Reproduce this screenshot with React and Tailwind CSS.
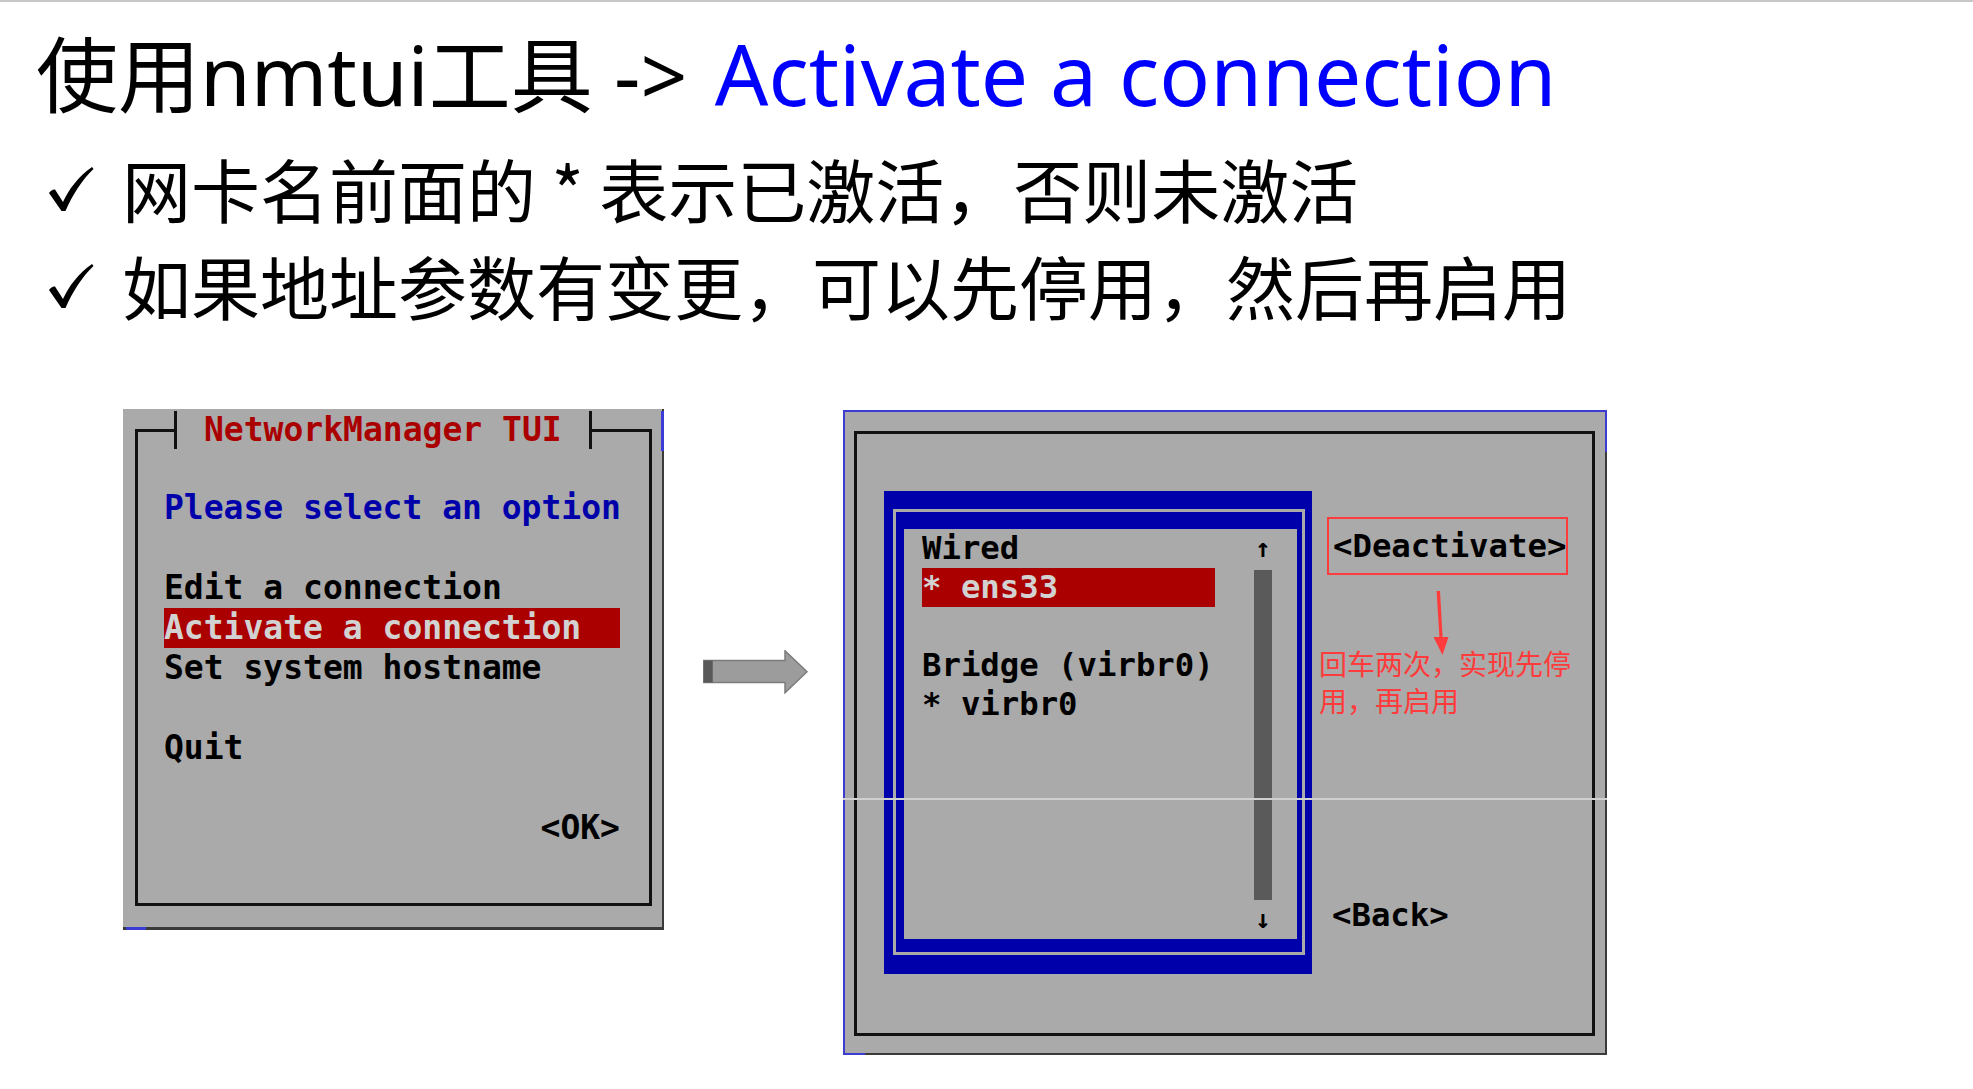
const tui = "font-['DejaVu_Sans_Mono','Liberation_Mono',monospace] font-bold"

function Check() {
  return (
    <svg width="74" height="46" viewBox="0 0 74 46" className="shrink-0">
      <path
        d="M1 27 C3 24.5 5 23 7 23.5 L15 36 C21 23 30 11 44 1 L45.5 3 C34 14 25 28 17.5 45 L13.5 45 Z"
        fill="#000"
      />
    </svg>
  )
}

function LeftPanel() {
  return (
    <div className="relative flex h-[521px] w-[541px] shrink-0 flex-col border-r-2 border-b-[3px] border-[#3a3a3a] bg-[#aaaaaa] pl-[12px] pr-[10px] pt-[20px] pb-[21px]">
      {/* screen-edge artifacts */}
      <span className="absolute right-[-2px] top-[2px] h-[40px] w-[3px] bg-[#3b3bd6]" />
      <span className="absolute bottom-[-3px] left-[3px] h-[3px] w-[20px] bg-[#3b3bd6]" />

      <div className={`relative flex-1 border-[3px] border-[#111] pl-[26px] pt-[56px] text-[33px] leading-[40px] text-black ${tui}`}>
        <div className="absolute left-[36px] top-[-21px] flex h-[38px] items-center whitespace-pre border-x-[3px] border-[#111] bg-[#aaaaaa] px-[27px] leading-[38px] text-[#aa0000]">
          NetworkManager TUI
        </div>
        <div className="w-[456px] whitespace-pre">
          <div className="text-[#0000aa]">Please select an option</div>
          <div className="h-[40px]" />
          <div>Edit a connection</div>
          <div className="bg-[#aa0000] text-[#d2d2d2]">Activate a connection</div>
          <div>Set system hostname</div>
          <div className="h-[40px]" />
          <div>Quit</div>
          <div className="h-[40px]" />
          <div className="text-right">&lt;OK&gt;</div>
        </div>
      </div>
    </div>
  )
}

function GrayArrow() {
  return (
    <svg width="106" height="44" viewBox="0 0 106 44" className="ml-[39px] mt-[241px] shrink-0">
      <path d="M0.75 10.5 H82 V0.75 L104 21.75 L82 42.75 V32.5 H0.75 Z" fill="#9c9c9c" stroke="#7c7c7c" strokeWidth="1.5" />
      <rect x="0.75" y="10.5" width="9" height="22" fill="#595959" />
    </svg>
  )
}

function RightPanel() {
  return (
    <div className="relative ml-[34px] mt-[1px] flex h-[645px] w-[764px] shrink-0 border-2 border-t-[#3c3cd2] border-l-[#3c3cd2] border-r-[#3a3a3a] border-b-[#3a3a3a] bg-[#aaaaaa] pl-[9px] pr-[10px] pt-[19px] pb-[17px]">
      <span className="absolute right-[-2px] top-[-2px] h-[42px] w-[2px] bg-[#3c3cd2]" />
      <span className="absolute bottom-[-2px] left-[-2px] h-[2px] w-[22px] bg-[#3c3cd2]" />

      <div className="flex flex-1 items-start border-[3px] border-[#111] pl-[27px] pt-[57px]">
        {/* list box */}
        <div className="flex h-[483px] w-[428px] shrink-0 bg-[#0000aa] pt-[18px] pl-[9px] pr-[7px] pb-[19px]">
          <div className="flex flex-1 border-[3px] border-[#aaaaaa]">
            <div className="flex flex-1 bg-[#0000aa] pt-[17px] pl-[8px] pr-[5px] pb-[13px]">
              <div className={`flex flex-1 bg-[#aaaaaa] pl-[18px] pr-[25px] text-[32.3px] leading-[39px] text-black ${tui}`}>
                <div className="flex-1 whitespace-pre">
                  <div>Wired</div>
                  <div className="w-[293px] bg-[#aa0000] text-[#d2d2d2]">* ens33</div>
                  <div className="h-[39px]" />
                  <div>Bridge (virbr0)</div>
                  <div>* virbr0</div>
                </div>
                <div className="flex w-[18px] flex-col items-center">
                  <div className="h-[39px] text-[26px]">↑</div>
                  <div className="mt-[2px] w-[18px] flex-1 bg-[#5a5a5a]" />
                  <div className="h-[39px] text-[26px]">↓</div>
                </div>
              </div>
            </div>
          </div>
        </div>

        {/* buttons + note */}
        <div className={`ml-[15px] mt-[26px] flex h-[418px] w-[241px] flex-col text-[32.3px] leading-[40px] text-black ${tui}`}>
          <div className="flex h-[58px] items-center border-2 border-[#ff3b3b] pl-[4px]">&lt;Deactivate&gt;</div>
          <svg width="16" height="64" viewBox="0 0 16 64" className="ml-[106px] mt-[16px]">
            <path d="M3.6 0 H7 L9.6 46 H15.5 L9.5 64 L0.5 46 H6.4 Z" fill="#ff3b3b" />
          </svg>
          <div className="ml-[-8px] mt-[-10px] whitespace-nowrap font-['Noto_Sans_CJK_SC',sans-serif] text-[28px] font-normal leading-[37px] text-[#ff3b3b]">
            <div>回车两次，实现先停</div>
            <div>用，再启用</div>
          </div>
          <div className="mt-auto pl-[5px]">&lt;Back&gt;</div>
        </div>
      </div>

      {/* scan line across the capture */}
      <span className="absolute left-[-2px] right-[-2px] top-[386px] h-[2px] bg-[#d0d0d0]" />
    </div>
  )
}

export default function App() {
  return (
    <div className="relative min-h-[1089px] w-full overflow-hidden bg-white">
      <div className="h-[2px] w-full bg-[#c8c8c8]" />

      <h1 className="whitespace-nowrap pl-[36px] pt-[31px] font-['Noto_Sans','Noto_Sans_CJK_SC',sans-serif] text-[82px] font-normal leading-[82px] text-black">
        使用nmtui工具 -&gt; <span className="ml-[6px] text-[84px] text-[#0000ff]">Activate a connection</span>
      </h1>

      <ul className="mt-[25px] pl-[48px] font-['Noto_Sans_CJK_SC',sans-serif] text-[69px] leading-[97px] text-black">
        <li className="flex items-center whitespace-nowrap">
          <Check />
          网卡名前面的 * 表示已激活，否则未激活
        </li>
        <li className="flex items-center whitespace-nowrap">
          <Check />
          如果地址参数有变更，可以先停用，然后再启用
        </li>
      </ul>

      <div className="mt-[75px] flex items-start pl-[123px]">
        <LeftPanel />
        <GrayArrow />
        <RightPanel />
      </div>
    </div>
  )
}
